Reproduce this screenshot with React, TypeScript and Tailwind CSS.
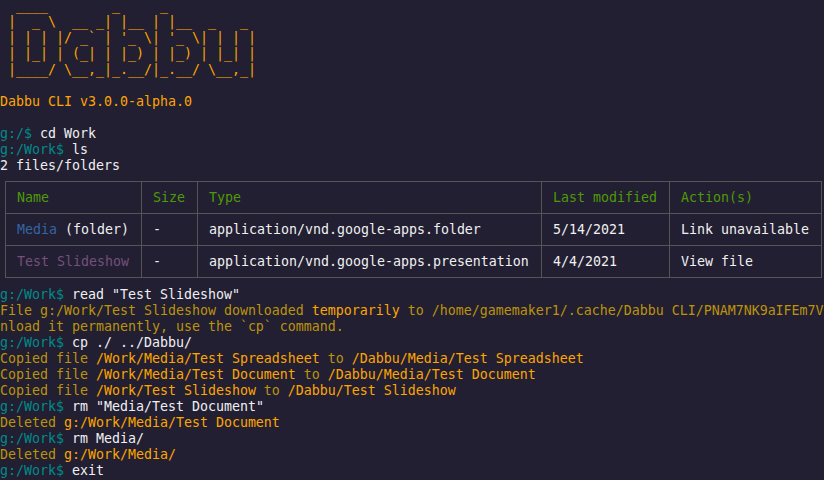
const O = "text-[#ffa500]";
const D = "text-[#bd930b]";
const P = "text-[#008b8b]";
const W = "text-[#f0f0f0]";

const art = [
  " |  _ \\  __ _| |__ | |__  _   _",
  " | | | |/ _` | '_ \\| '_ \\| | | |",
  " | |_| | (_| | |_) | |_) | |_| |",
  " |____/ \\__,_|_.__/|_.__/ \\__,_|",
];

function Line({ children }: { children?: React.ReactNode }) {
  return <div className="h-4 whitespace-pre overflow-hidden">{children}</div>;
}

function Prompt({ path, cmd }: { path: string; cmd: string }) {
  return (
    <Line>
      <span className={P}>{path}$ </span>
      <span className={W}>{cmd}</span>
    </Line>
  );
}

function Th({ children }: { children: React.ReactNode }) {
  return <th className="border border-[#555555] px-[11px] py-0 h-8 font-normal text-left text-[#4e9a06]">{children}</th>;
}

function Td({ children }: { children: React.ReactNode }) {
  return <td className={`border border-[#555555] px-[11px] py-0 h-8 ${W}`}>{children}</td>;
}

export default function App() {
  return (
    <div className="h-[480px] w-[824px] overflow-hidden bg-[#221f32] font-['DejaVu_Sans_Mono',monospace] text-[13.29px] leading-4">
      <div className={O}>
        <div className="h-[14px] leading-3 whitespace-pre">{"  ____        _     _"}</div>
        {art.map((l, i) => (
          <div key={i} className="h-4 whitespace-pre">{l}</div>
        ))}
      </div>
      <Line />
      <Line>
        <span className={O}>Dabbu CLI v3.0.0-alpha.0</span>
      </Line>
      <Line />
      <Prompt path="g:/" cmd="cd Work" />
      <Prompt path="g:/Work" cmd="ls" />
      <Line>
        <span className={W}>2 files/folders</span>
      </Line>
      <div className="pl-[5px] pt-[7px] pb-[9px]">
        <table className="border-collapse table-fixed w-[817px]">
          <colgroup>
            <col className="w-[136px]" />
            <col className="w-[56px]" />
            <col className="w-[344px]" />
            <col className="w-[128px]" />
            <col className="w-[152px]" />
          </colgroup>
          <thead>
            <tr>
              <Th>Name</Th>
              <Th>Size</Th>
              <Th>Type</Th>
              <Th>Last modified</Th>
              <Th>Action(s)</Th>
            </tr>
          </thead>
          <tbody>
            <tr>
              <Td>
                <span className="text-[#3465a4]">Media</span> (folder)
              </Td>
              <Td>-</Td>
              <Td>application/vnd.google-apps.folder</Td>
              <Td>5/14/2021</Td>
              <Td>Link unavailable</Td>
            </tr>
            <tr>
              <Td>
                <span className="text-[#75507b]">Test Slideshow</span>
              </Td>
              <Td>-</Td>
              <Td>application/vnd.google-apps.presentation</Td>
              <Td>4/4/2021</Td>
              <Td>View file</Td>
            </tr>
          </tbody>
        </table>
      </div>
      <Prompt path="g:/Work" cmd={'read "Test Slideshow"'} />
      <Line>
        <span className={D}>File g:/Work/Test Slideshow downloaded </span>
        <span className={O}>temporarily</span>
        <span className={D}> to /home/gamemaker1/.cache/Dabbu CLI/PNAM7NK9aIFEm7V</span>
      </Line>
      <Line>
        <span className={D}>nload it permanently, use the `cp` command.</span>
      </Line>
      <Prompt path="g:/Work" cmd="cp ./ ../Dabbu/" />
      <Line>
        <span className={D}>Copied file </span>
        <span className={O}>/Work/Media/Test Spreadsheet</span>
        <span className={D}> to </span>
        <span className={O}>/Dabbu/Media/Test Spreadsheet</span>
      </Line>
      <Line>
        <span className={D}>Copied file </span>
        <span className={O}>/Work/Media/Test Document</span>
        <span className={D}> to </span>
        <span className={O}>/Dabbu/Media/Test Document</span>
      </Line>
      <Line>
        <span className={D}>Copied file </span>
        <span className={O}>/Work/Test Slideshow</span>
        <span className={D}> to </span>
        <span className={O}>/Dabbu/Test Slideshow</span>
      </Line>
      <Prompt path="g:/Work" cmd={'rm "Media/Test Document"'} />
      <Line>
        <span className={D}>Deleted </span>
        <span className={O}>g:/Work/Media/Test Document</span>
      </Line>
      <Prompt path="g:/Work" cmd="rm Media/" />
      <Line>
        <span className={D}>Deleted </span>
        <span className={O}>g:/Work/Media/</span>
      </Line>
      <Prompt path="g:/Work" cmd="exit" />
    </div>
  );
}
